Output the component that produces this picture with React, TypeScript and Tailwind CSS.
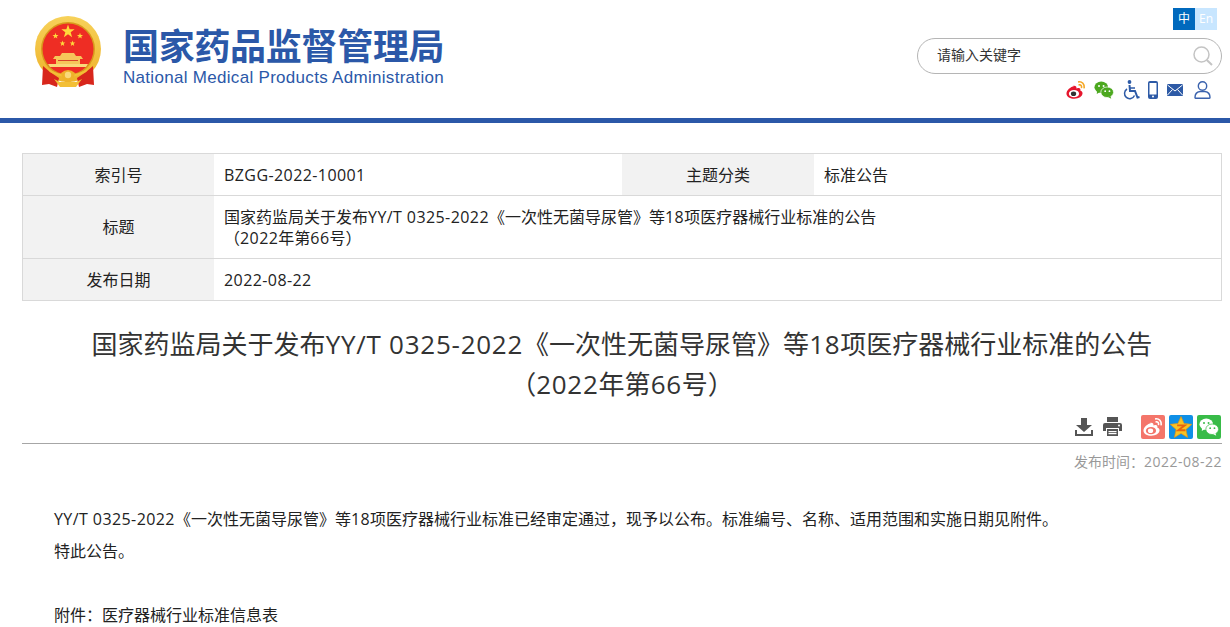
import React from "react";

const font = { fontFamily: '"Open Sans","Noto Sans CJK SC",sans-serif' };

function Star({ x, y, r, fill = "#ffd93b" }: { x: number; y: number; r: number; fill?: string }) {
  const pts = Array.from({ length: 10 }, (_, i) => {
    const a = -Math.PI / 2 + (i * Math.PI) / 5;
    const rr = i % 2 === 0 ? r : r * 0.4;
    return `${x + rr * Math.cos(a)},${y + rr * Math.sin(a)}`;
  }).join(" ");
  return <polygon points={pts} fill={fill} />;
}

function Emblem() {
  return (
    <svg width="68" height="72" viewBox="0 0 68 72">
      <defs>
        <linearGradient id="ring" x1="0" y1="0" x2="0" y2="1">
          <stop offset="0" stopColor="#f7d25a" />
          <stop offset="1" stopColor="#eeb22a" />
        </linearGradient>
      </defs>
      <circle cx="34" cy="33" r="33" fill="url(#ring)" />
      <circle cx="34" cy="33" r="27" fill="#d99a1c" />
      <circle cx="34" cy="33" r="25.500" fill="#ee2d24" />
      <Star x={34} y={15.500} r={7} />
      <Star x={21.500} y={20} r={3.200} />
      <Star x={46} y={20} r={3.200} />
      <Star x={28.500} y={27.500} r={3} />
      <Star x={38.500} y={27.500} r={3} />
      <path d="M28 37 H40 L42 40 H47 L49 43 L46 43 V48 H22 V43 L19 43 L21 40 H26 Z" fill="#f6c65a" />
      <path d="M24 44 H44 V45 H24 Z" fill="#d8442a" />
      <path d="M14 48 H54 L52 51 H16 Z" fill="#f9d97a" />
      <path d="M9 50 L16 56 L25 62 L23 71 L15 68 L8 69 Z M59 50 L52 56 L43 62 L45 71 L53 68 L60 69 Z" fill="#d8261c" />
      <path d="M14 53 Q34 64 54 53 L52 56 Q34 66 16 56 Z" fill="#f3bf36" />
      <path d="M27 57 Q34 51 41 57 L39 64 L34 68 L29 64 Z" fill="#eeb22a" />
      <circle cx="34" cy="59" r="3.200" fill="#f9d97a" />
      <path d="M20 63 L26 71 H42 L48 63 L42 66 H26 Z" fill="#f3bf36" />
    </svg>
  );
}

function Weibo({ size = 20, dark = "#e6162d", inner = "#fff", pupil = "#333", ear = "#f5a623" }: { size?: number; dark?: string; inner?: string; pupil?: string; ear?: string }) {
  return (
    <svg width={size} height={size} viewBox="0 0 22 22">
      <path d="M9 6.500c-4 1-8.500 4.500-8.500 8.500 0 3.400 4.200 5.500 8.700 5.500 4.800 0 9-2.600 9-6 0-2-2-2.700-2.500-3 .7-1.800-.3-3-2.500-2.700l-1.700.6c.4-2-1-3.600-3.800-2.900z" fill={dark} />
      <ellipse cx="8.800" cy="15" rx="5.600" ry="4" fill={inner} />
      <ellipse cx="8.300" cy="15.200" rx="2.900" ry="2.500" fill={pupil} />
      <path d="M14 2c3.700-.4 6.500 2.500 6 6.500M14.500 5.300c1.900-.2 2.900 1 2.600 2.900" stroke={ear} strokeWidth="1.800" fill="none" strokeLinecap="round" />
    </svg>
  );
}

function WeChat({ size = 20, color = "#4ca81f", gap = "#fff" }: { size?: number; color?: string; gap?: string }) {
  return (
    <svg width={size} height={size} viewBox="0 0 22 22">
      <ellipse cx="8" cy="8" rx="7.500" ry="6.300" fill={color} />
      <path d="M3.500 11.500 L3 15.500 L7 13z" fill={color} />
      <ellipse cx="14.500" cy="13.500" rx="7" ry="5.800" fill={color} stroke={gap} strokeWidth="0.800" />
      <path d="M18 17.500 L19 20.500 L15.500 18.800z" fill={color} />
      <circle cx="5.500" cy="6.500" r="1.100" fill={gap} />
      <circle cx="10.500" cy="6.500" r="1.100" fill={gap} />
      <circle cx="12.300" cy="12.300" r="1" fill={gap} />
      <circle cx="17" cy="12.300" r="1" fill={gap} />
    </svg>
  );
}

function Wheelchair() {
  return (
    <svg width="18" height="20" viewBox="0 0 18 20" fill="none" stroke="#2d5aa6">
      <circle cx="7.500" cy="2" r="1.900" fill="#2d5aa6" stroke="none" />
      <path d="M7.500 5 L8 11 L13 11 L15.500 17.500 L17.500 17" strokeWidth="2" />
      <path d="M8 8 L13 8" strokeWidth="1.500" />
      <path d="M5 9 A5.200 5.200 0 1 0 12.500 15.500" strokeWidth="1.500" />
    </svg>
  );
}

function Phone() {
  return (
    <svg width="10" height="18" viewBox="0 0 10 18">
      <rect x="0" y="0" width="10" height="18" rx="2" fill="#2d5aa6" />
      <rect x="1.500" y="2" width="7" height="11.500" fill="#fff" />
      <circle cx="5" cy="15.500" r="1" fill="#fff" />
    </svg>
  );
}

function Mail() {
  return (
    <svg width="16" height="12" viewBox="0 0 16 12">
      <rect width="16" height="12" rx="1" fill="#2d5aa6" />
      <path d="M0.500 1 L8 7 L15.500 1 M0.500 11 L5.500 5.500 M15.500 11 L10.500 5.500" stroke="#fff" strokeWidth="1" fill="none" />
    </svg>
  );
}

function User() {
  return (
    <svg width="17" height="18" viewBox="0 0 17 18" fill="none" stroke="#3a62ad" strokeWidth="1.400">
      <circle cx="8.500" cy="5" r="4.200" />
      <path d="M1 16.500 C1 12 4 10.800 6 10.500 L11 10.500 C13 10.800 16 12 16 16.500 C16 17.200 15.500 17.300 15 17.300 L2 17.300 C1.500 17.300 1 17.200 1 16.500 Z" />
    </svg>
  );
}

function Download() {
  return (
    <svg width="18" height="18" viewBox="0 0 18 18" fill="#555">
      <path d="M6 0 H12 V7 H17 L9 14 L1 7 H6 Z" />
      <path d="M0 12 H2 V16 H16 V12 H18 V18 H0 Z" />
    </svg>
  );
}

function Printer() {
  return (
    <svg width="19" height="19" viewBox="0 0 19 19" fill="#555">
      <path d="M4 0 H15 V5 H4 Z" />
      <path d="M2 6 H17 Q19 6 19 8 V14 H16 V11 H3 V14 H0 V8 Q0 6 2 6 Z" />
      <path d="M4 12 H15 V19 H4 Z" />
      <rect x="5.500" y="14" width="8" height="1.200" fill="#fff" />
      <rect x="5.500" y="16" width="8" height="1.200" fill="#fff" />
      <circle cx="16" cy="8.500" r="1" fill="#fff" />
    </svg>
  );
}

function QZone() {
  return (
    <svg width="22" height="22" viewBox="0 0 20 20">
      <polygon points="10,0.500 12.800,6.800 19.800,7.600 14.500,12.300 16,19.500 10,15.800 4,19.500 5.500,12.300 0.200,7.600 7.200,6.800" fill="#f7c325" stroke="#e8940f" strokeWidth="0.600" />
      <path d="M6.500 8.500 H13.500 L7.500 13 H14" stroke="#e8640f" strokeWidth="1.700" fill="none" />
    </svg>
  );
}

function SearchIcon() {
  return (
    <svg width="20" height="20" viewBox="0 0 20 20" fill="none" stroke="#c4c4c4">
      <circle cx="8.500" cy="8.500" r="7.500" strokeWidth="1.500" />
      <path d="M13.800 14 L19 19" strokeWidth="2" />
    </svg>
  );
}

const labelCls = "bg-[#f2f2f2] flex items-center justify-center pt-[1px]";
const valueCls = "flex items-center pl-[10px] pt-[1px]";
const s16 = "tracking-[0.42px]";
const s26 = "tracking-[0.75px]";
const s14 = "tracking-[0.5px]";

export default function App() {
  return (
    <div className="w-[1230px] h-[627px] overflow-hidden bg-white text-[#333]" style={font}>
      <header className="h-[123px] border-b-[5px] border-[#2b58a8] flex justify-between pl-[34px] pr-[8px]">
        <div className="flex items-start pt-[16px]">
          <Emblem />
          <div className="ml-[21px] mt-[7px] flex flex-col text-[#2b58a8]">
            <div className="text-[36px] leading-[42px] font-bold tracking-[-0.3px]" style={{ fontFamily: '"Noto Sans CJK SC",sans-serif' }}>国家药品监督管理局</div>
            <div className="text-[17px] leading-[22px] mt-[2px] whitespace-nowrap tracking-[0.3px]" style={{ fontFamily: '"Liberation Sans",sans-serif' }}>National Medical Products Administration</div>
          </div>
        </div>
        <div className="flex flex-col items-end w-[305px]">
          <div className="flex mt-[8px] mr-[5px] text-[12px] leading-[22px] text-center">
            <div className="w-[22px] h-[22px] bg-[#0069bd] text-white">中</div>
            <div className="w-[22px] h-[22px] bg-[#c8e6ff] text-white">En</div>
          </div>
          <div className="mt-[8px] w-[305px] h-[36px] border border-[#b5b5b5] rounded-[18px] flex items-center justify-between pl-[19px] pr-[8px]">
            <span className="text-[14px] leading-[20px] text-[#333] mb-[2px]">请输入关键字</span>
            <SearchIcon />
          </div>
          <div className="mt-[6px] mr-[11px] flex items-center h-[20px]">
            <Weibo />
            <span className="ml-[8px]"><WeChat /></span>
            <span className="ml-[8px]"><Wheelchair /></span>
            <span className="ml-[8px]"><Phone /></span>
            <span className="ml-[9px]"><Mail /></span>
            <span className="ml-[11px]"><User /></span>
          </div>
        </div>
      </header>

      <div className="mt-[30px] ml-[22px] w-[1200px] border border-[#d9d9d9] text-[16px] text-[#222] leading-[21px]">
        <div className="grid grid-cols-[191px_408px_192px_1fr] h-[42px] border-b border-[#d9d9d9]">
          <div className={labelCls}>索引号</div>
          <div className={valueCls}><span className={s16}>BZGG-2022-10001</span></div>
          <div className={labelCls}>主题分类</div>
          <div className={valueCls}>标准公告</div>
        </div>
        <div className="grid grid-cols-[191px_1fr] h-[63px] border-b border-[#d9d9d9]">
          <div className="bg-[#f2f2f2] flex items-center justify-center">标题</div>
          <div className="pl-[10px] pt-[11px]">
            <div>国家药监局关于发布<span className={s16}>YY/T 0325-2022</span>《一次性无菌导尿管》等<span className={s16}>18</span>项医疗器械行业标准的公告</div>
            <div>（<span className={s16}>2022</span>年第<span className={s16}>66</span>号）</div>
          </div>
        </div>
        <div className="grid grid-cols-[191px_1fr] h-[41px]">
          <div className={labelCls}>发布日期</div>
          <div className={valueCls}><span className={s16}>2022-08-22</span></div>
        </div>
      </div>

      <h1 className="mt-[23px] ml-[22px] w-[1200px] text-center text-[26px] leading-[40px] text-[#333] font-normal">
        <div>国家药监局关于发布<span className={s26}>YY/T 0325-2022</span>《一次性无菌导尿管》等<span className={s26}>18</span>项医疗器械行业标准的公告</div>
        <div>（<span className={s26}>2022</span>年第<span className={s26}>66</span>号）</div>
      </h1>

      <div className="ml-[22px] w-[1200px] h-[40px] border-b border-[#a6a6a6] flex justify-end items-start pr-[1px] pt-[11px]">
        <div className="mt-[2px] flex items-center">
          <Download />
          <span className="ml-[10px]"><Printer /></span>
        </div>
        <div className="ml-[19px] w-[24px] h-[24px] rounded-[2px] bg-[#f4756a] flex items-center justify-center"><Weibo size={20} dark="#fff" inner="#f4756a" pupil="#fff" ear="#fff" /></div>
        <div className="ml-[4px] w-[24px] h-[24px] rounded-[2px] bg-[#0f8fe6] flex items-center justify-center"><QZone /></div>
        <div className="ml-[4px] w-[24px] h-[24px] rounded-[2px] bg-[#38bb48] flex items-center justify-center"><WeChat size={20} color="#fff" gap="#38bb48" /></div>
      </div>

      <div className="ml-[22px] w-[1200px] mt-[8px] text-right text-[14px] leading-[20px] text-[#999]">发布时间：<span className={s14}>2022-08-22</span></div>

      <div className="mt-[31px] ml-[54px] text-[16px] leading-[32px] text-[#222] whitespace-nowrap">
        <div><span className={s16}>YY/T 0325-2022</span>《一次性无菌导尿管》等<span className={s16}>18</span>项医疗器械行业标准已经审定通过，现予以公布。标准编号、名称、适用范围和实施日期见附件。</div>
        <div>特此公告。</div>
        <div className="mt-[32px]">附件：医疗器械行业标准信息表</div>
      </div>
    </div>
  );
}
